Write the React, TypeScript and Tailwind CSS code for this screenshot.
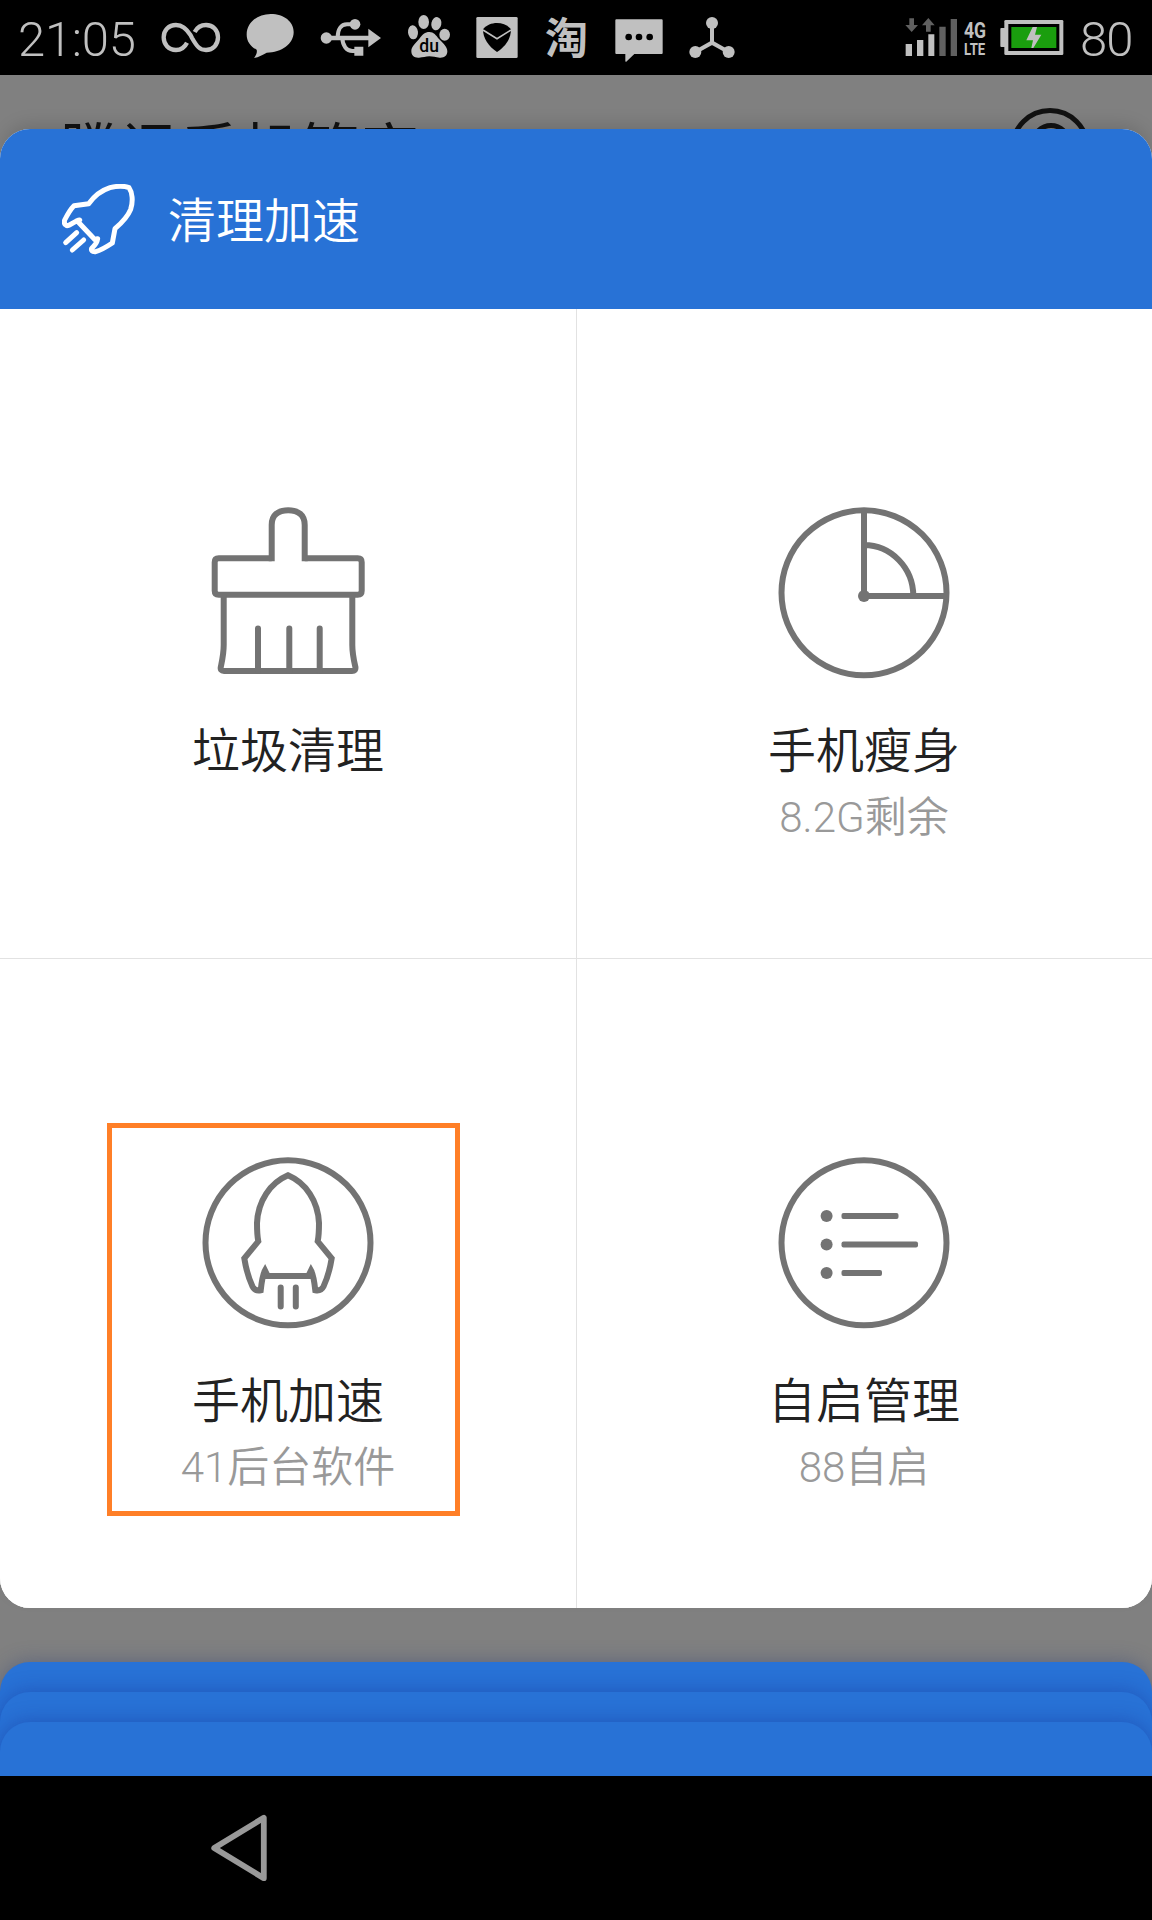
import type { ReactNode } from 'react';

const FONT = "font-['Roboto','Noto_Sans_CJK_SC',sans-serif]";

function InfinityIcon() {
  return (
    <svg className="ml-[27px] h-[75px] w-[60px]" viewBox="482 0 180 225" fill="none" stroke="#c0c0c0" strokeWidth="13">
      <path d="M560 128 C553 142 542 150 527 150 C504 150 490 133 490 112 C490 91 505 75 527 75 C545 75 556 84 571 106 L575 114 C590 140 598 150 617 150 C638 150 653 134 653 112 C653 91 638 75 617 75 C602 75 591 81 583 96" />
    </svg>
  );
}

function BubbleIcon() {
  return (
    <svg className="ml-[25px] h-[75px] w-[48px]" viewBox="738 0 144 225" fill="#c0c0c0">
      <path d="M812 42 C852 42 881 65 881 96 C881 131 845 158 800 158 C790 163 776 172 762 174 C769 166 772 157 770 149 C752 140 740 124 740 104 C740 68 772 42 812 42Z" />
    </svg>
  );
}

function UsbIcon() {
  return (
    <svg className="ml-[26px] h-[75px] w-[62px]" viewBox="959 0 186 225" fill="none" stroke="#c0c0c0" strokeWidth="12">
      <path d="M978 114 H1110" strokeWidth="14" />
      <path d="M1012 112 C1012 88 1022 73 1040 73 H1064" />
      <path d="M1026 112 C1026 138 1040 153 1056 153 H1076" />
      <circle cx="978" cy="114" r="17" fill="#c0c0c0" stroke="none" />
      <circle cx="1064" cy="73" r="16" fill="#c0c0c0" stroke="none" />
      <path d="M1104 86 L1142 114 L1104 142Z M1062 140 H1089 V167 H1062Z" fill="#c0c0c0" stroke="none" />
    </svg>
  );
}

function BaiduIcon() {
  return (
    <svg className="ml-[25px] h-[75px] w-[44px]" viewBox="80 0 132 225" fill="#c0c0c0">
      <ellipse cx="98" cy="97" rx="15" ry="21" transform="rotate(-6 98 97)" />
      <ellipse cx="130" cy="66" rx="16" ry="21" />
      <ellipse cx="168" cy="71" rx="15" ry="20" transform="rotate(12 168 71)" />
      <ellipse cx="193" cy="104" rx="16" ry="18" />
      <path d="M147 96 C160 96 167 106 176 117 C188 130 201 139 201 154 C201 168 191 174 178 173 C166 172 158 169 147 169 C136 169 128 173 116 173 C102 174 93 167 93 153 C93 138 107 129 117 116 C126 104 134 96 147 96Z" />
      <text x="117" y="157" fill="#000" fontSize="56" fontWeight="500" textLength="59" lengthAdjust="spacingAndGlyphs">
        du
      </text>
    </svg>
  );
}

function ShieldIcon() {
  return (
    <svg className="ml-[25px] h-[75px] w-[42px]" viewBox="288 0 126 225">
      <rect x="289" y="51" width="124" height="123" rx="4" fill="#c0c0c0" />
      <path d="M351 69 C367 69 383 75 393 88 C393 116 376 140 351 156 C326 140 309 116 309 88 C319 75 335 69 351 69Z" />
      <path d="M309 90 L351 116 L393 90" fill="none" stroke="#c0c0c0" strokeWidth="5" />
    </svg>
  );
}

function MessageIcon() {
  return (
    <svg className="ml-[25px] h-[75px] w-[48px]" viewBox="705 0 144 225" fill="#c0c0c0">
      <path d="M709 58 H845 Q848 58 848 61 V159 Q848 162 845 162 H763 L738 186 L736 184 V162 H709 Q706 162 706 159 V61 Q706 58 709 58Z" />
      <g fill="#000">
        <circle cx="746" cy="111" r="10" />
        <circle cx="777" cy="111" r="10" />
        <circle cx="809" cy="111" r="10" />
      </g>
    </svg>
  );
}

function ShareIcon() {
  return (
    <svg className="ml-[25px] h-[75px] w-[48px]" viewBox="924 0 144 225" fill="#c0c0c0">
      <path d="M996 70 V128 M946 156 L996 128 L1046 156" stroke="#c0c0c0" strokeWidth="12" fill="none" />
      <circle cx="996" cy="69" r="18" />
      <circle cx="946" cy="156" r="18" />
      <circle cx="1046" cy="156" r="18" />
    </svg>
  );
}

function SignalIcon() {
  return (
    <svg className="h-[75px] w-[53px]" viewBox="374 0 159 225" fill="#c0c0c0">
      <path d="M376 132h19v36h-19z M410 120h19v48h-19z M444 103h18v65h-18z" />
      <g fill="#606060">
        <path d="M477 80h19v88h-19z M511 57h19v111h-19z" />
        <path d="M387 55h14v20h12l-19 21l-19-21h12z" />
        <path d="M437 95h14v-19h12l-19-22l-19 22h12z" />
      </g>
    </svg>
  );
}

function BatteryIcon() {
  return (
    <svg className="ml-[13px] h-[75px] w-[64px]" viewBox="659 0 192 225">
      <rect x="660" y="84" width="16" height="57" rx="3" fill="#c0c0c0" />
      <rect x="672" y="60" width="177" height="105" rx="4" fill="#c0c0c0" />
      <rect x="684" y="72" width="153" height="81" />
      <rect x="693" y="81" width="135" height="63" fill="#1a9e0e" />
      <path d="M757 81 H770 L764 104 H783 L759 144 H753 L758 121 H738Z" fill="#c0c0c0" />
    </svg>
  );
}

function StatusBar() {
  return (
    <div className="flex h-[75px] items-center bg-black pl-[18px] text-[49px] font-light leading-none text-[#c0c0c0]">
      <span className="w-[116px] pt-[4px] tracking-[-0.3px]">21:05</span>
      <InfinityIcon />
      <BubbleIcon />
      <UsbIcon />
      <BaiduIcon />
      <ShieldIcon />
      <span className="ml-[27px] w-[45px] pt-[3px] text-[43px] font-bold">淘</span>
      <MessageIcon />
      <ShareIcon />
      <div className="ml-auto flex items-center pr-[20px]">
        <SignalIcon />
        <div className="ml-[6px] flex w-[23px] flex-col pt-[4px] font-bold">
          <span className="origin-left scale-x-[0.8] text-[22px] leading-[20px]">4G</span>
          <span className="origin-left scale-x-[0.82] text-[16px] leading-[17px]">LTE</span>
        </div>
        <BatteryIcon />
        <span className="ml-[16px] w-[52px] pt-[4px] tracking-[-1px]">80</span>
      </div>
    </div>
  );
}

// Title row of the page behind the sheet, only its top edge is visible
function BackgroundHeader() {
  return (
    <div className="flex h-[54px] justify-between overflow-hidden pl-[60px] pr-[60px] pt-[33px] text-[#121212]">
      <span className="whitespace-nowrap pt-[9px] text-[60px] leading-[72px]">腾讯手机管家</span>
      <svg className="h-[84px] w-[84px] shrink-0" viewBox="0 0 84 84" fill="none" stroke="currentColor" strokeWidth="5">
        <circle cx="42" cy="40" r="37.5" />
        <circle cx="43" cy="35" r="17.5" />
      </svg>
    </div>
  );
}

function HeaderRocket() {
  return (
    <svg className="h-[71px] w-[74px]" viewBox="186 99 222 213" fill="none" stroke="#fff" strokeWidth="15" strokeLinejoin="round" strokeLinecap="round">
      <path d="M387 110 C397 124 400 150 392 175 C383 197 366 215 345 233 L337 276 C322 286 302 298 287 302 C275 303 273 298 275 292 C280 285 290 282 293 263 L285 266 L234 212 L239 207 C224 209 210 226 200 224 C192 221 192 215 194 207 C202 191 211 175 222 164 L266 158 C283 135 308 117 330 110 C350 105 374 105 387 110Z" />
      <path d="M197 275 L230 245 M217 297 L251 267" />
    </svg>
  );
}

function TileIcon({ children }: { children: ReactNode }) {
  return (
    <svg className="h-[172px] w-[172px]" viewBox="0 0 172 172" fill="none" stroke="#737373" strokeWidth="6">
      {children}
    </svg>
  );
}

const tiles = [
  {
    title: '垃圾清理',
    desc: '',
    icon: (
      <TileIcon>
        <path d="M69.7 54.2 V18 C69.7 8 76 3.3 86.2 3.3 C96.4 3.3 102.7 8 102.7 18 V54.2" />
        <path d="M69.7 51.3 H16.7 Q12.7 51.3 12.7 55.3 V83.7 Q12.7 87.7 16.7 87.7 H155.7 Q159.7 87.7 159.7 83.7 V55.3 Q159.7 51.3 155.7 51.3 H102.7" />
        <path d="M21.7 88 V138 C21.7 147 20 154 18.8 160 Q18 164 22 164 H150 Q154 164 153.4 160 C152 154 150.3 147 150.3 138 V88" />
        <path d="M56 164 V121.5 M87.3 164 V121.5 M117.7 164 V121.5" strokeLinecap="round" />
      </TileIcon>
    ),
  },
  {
    title: '手机瘦身',
    desc: '8.2G剩余',
    icon: (
      <TileIcon>
        <circle cx="86" cy="85.8" r="82.5" />
        <path d="M86 3 V89 H168.6 M86 38 C113 38 135.3 61 135.3 89" />
        <circle cx="86" cy="89" r="6" fill="#737373" stroke="none" />
      </TileIcon>
    ),
  },
  {
    title: '手机加速',
    desc: '41后台软件',
    icon: (
      <TileIcon>
        <circle cx="86" cy="85.8" r="82.5" />
        <path d="M86 18.3 C104 26 116 44 117 66 C117 74 117 78 115.7 84.3 L129.7 101.3 C128 112 125 122 121.5 129.5 C119.5 133.5 117 134 113.3 133.3 C112.5 126 111.5 118 109 113.5 L106.3 119 H65.7 L63 113.5 C60.5 118 59.5 126 58.7 133.3 C55 134 52.5 133.5 50.5 129.5 C47 122 44 112 42.3 101.3 L56.3 84.3 C55 78 55 74 55 66 C56 44 68 26 86 18.3Z" />
        <path d="M78.7 130.5 V149.5 M93.8 130.5 V149.5" strokeLinecap="round" />
      </TileIcon>
    ),
  },
  {
    title: '自启管理',
    desc: '88自启',
    icon: (
      <TileIcon>
        <circle cx="86" cy="85.8" r="82.5" />
        <g fill="#737373" stroke="none">
          <circle cx="48.6" cy="59" r="6" />
          <circle cx="48.6" cy="87.4" r="6" />
          <circle cx="48.6" cy="116" r="6" />
          <rect x="63.5" y="56" width="57" height="6" rx="2" />
          <rect x="63.5" y="84.5" width="76.5" height="6" rx="2" />
          <rect x="63.5" y="113" width="40.5" height="6" rx="2" />
        </g>
      </TileIcon>
    ),
  },
];

function Tile({ title, desc, icon }: (typeof tiles)[number]) {
  return (
    <div className="flex flex-col items-center bg-white pt-[198px] even:pr-px">
      {icon}
      <p className="mt-[41px] text-[48px] font-[350] leading-[64px] text-[#222]">{title}</p>
      {desc && <p className="mt-[4px] text-[42px] font-[350] leading-[60px] text-[#999]">{desc}</p>}
    </div>
  );
}

export default function App() {
  return (
    <div className={`flex h-[1920px] w-[1152px] flex-col overflow-hidden bg-[#808080] ${FONT}`}>
      <StatusBar />
      <BackgroundHeader />

      <section className="relative h-[1479px] rounded-[30px] bg-white shadow-[0_-8px_18px_-4px_rgba(0,0,0,0.14)]">
        <header className="flex h-[180px] items-center rounded-t-[30px] bg-[#2872d6] pl-[62px]">
          <HeaderRocket />
          <h1 className="ml-[32px] pt-[5px] text-[48px] font-[350] leading-[64px] text-white">清理加速</h1>
        </header>
        <div className="grid h-[1299px] grid-cols-[576px_575px] grid-rows-[649px_649px] gap-px overflow-hidden rounded-b-[30px] bg-[#e2e2e2]">
          {tiles.map((tile) => (
            <Tile key={tile.title} {...tile} />
          ))}
        </div>
        {/* highlight frame around 手机加速 */}
        <div className="absolute left-[107px] top-[994px] h-[393px] w-[353px] border-[5px] border-[#ff7f27]" />
      </section>

      {/* collapsed sheets */}
      <div className="mt-[54px] h-[114px] rounded-t-[30px] bg-[#2872d6] pt-[30px] shadow-[0_0_20px_rgba(40,60,120,0.4)]">
        <div className="h-[84px] rounded-t-[30px] bg-[#2872d6] pt-[30px] shadow-[0_0_20px_rgba(20,40,140,0.4)]">
          <div className="h-[54px] rounded-t-[30px] bg-[#2872d6] shadow-[0_0_20px_rgba(20,40,140,0.4)]" />
        </div>
      </div>

      <nav className="relative flex h-[144px] items-center bg-black pl-[210px]">
        <svg className="h-[68px] w-[60px]" viewBox="0 0 60 68" fill="none" stroke="#999" strokeWidth="5.8" strokeLinejoin="round">
          <path d="M4.2 34 L53.8 3.8 V64.2Z" />
        </svg>
      </nav>
    </div>
  );
}
